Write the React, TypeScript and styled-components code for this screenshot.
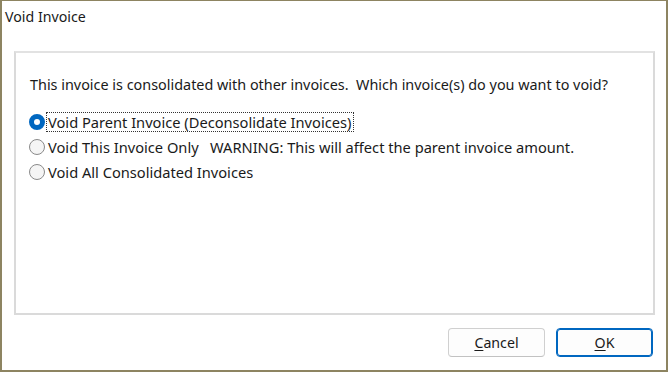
import React, { useState } from "react";
import styled, { createGlobalStyle } from "styled-components";

const Global = createGlobalStyle`
  html, body { margin: 0; padding: 0; background: #ffffff; }
  body { font-family: "Noto Sans", "Open Sans", sans-serif; }
`;

const Window = styled.div`
  box-sizing: border-box;
  width: 668px;
  height: 372px;
  background: #ffffff;
  border-style: solid;
  border-color: #8d8461;
  border-width: 1px 2px 2px 2px;
  display: flex;
  flex-direction: column;
`;

const Title = styled.div`
  font-size: 14.2px;
  line-height: 20px;
  color: #1a1a1a;
  padding: 6px 0 0 3px;
  height: 26px;
  box-sizing: border-box;
`;

const Body = styled.div`
  flex: 1;
  display: flex;
  flex-direction: column;
  padding: 24px 11px 13px 12px;
`;

const Group = styled.div`
  box-sizing: border-box;
  height: 264px;
  border: 2px solid #dadada;
  border-top-color: #e2e2e2;
  padding: 22px 0 0 13px;
  display: flex;
  flex-direction: column;
`;

const Question = styled.div`
  font-size: 14.4px;
  line-height: 20px;
  color: #1a1a1a;
  margin-left: 1px;
  margin-bottom: 17px;
`;

const Options = styled.div`
  display: flex;
  flex-direction: column;
  gap: 5px;
`;

const OptionRow = styled.label`
  display: flex;
  align-items: center;
  gap: 2px;
  height: 20px;
  cursor: default;
`;

const RadioCircle = styled.span<{ $on: boolean }>`
  box-sizing: border-box;
  width: 16px;
  height: 16px;
  border-radius: 50%;
  border: ${(p) => (p.$on ? "5px solid #0067c0" : "1px solid #8a8a8a")};
  background: ${(p) => (p.$on ? "#ffffff" : "#f5f5f5")};
  flex: none;
`;

const OptionText = styled.span<{ $focus: boolean }>`
  font-size: 14.65px;
  line-height: 18px;
  color: #1a1a1a;
  padding: 0 2px 0 1px;
  white-space: pre;
  outline: ${(p) => (p.$focus ? "1px dotted #333" : "none")};
  outline-offset: 0px;
`;

const Footer = styled.div`
  display: flex;
  justify-content: flex-end;
  gap: 11px;
  padding-top: 13px;
  padding-right: 2px;
`;

const Button = styled.button<{ $primary?: boolean }>`
  box-sizing: border-box;
  width: 97px;
  height: 29px;
  border-radius: 4px;
  background: #fdfdfd;
  border: 1px solid ${(p) => (p.$primary ? "#0067c0" : "#d0d0d0")};
  ${(p) => (p.$primary ? "box-shadow: inset 0 0 0 1px #0067c0;" : "border-bottom-color: #c2c2c2;")}
  font-family: "Noto Sans", sans-serif;
  font-size: 14.2px;
  color: #1a1a1a;
  padding: 0;
  u { text-decoration-thickness: 1px; text-underline-offset: 2px; }
`;

const options = [
  "Void Parent Invoice (Deconsolidate Invoices)",
  "Void This Invoice Only   WARNING: This will affect the parent invoice amount.",
  "Void All Consolidated Invoices",
];

export default function App() {
  const [sel, setSel] = useState(0);
  return (
    <>
      <Global />
      <Window>
        <Title>Void Invoice</Title>
        <Body>
          <Group>
            <Question>
              This invoice is consolidated with other invoices.&nbsp; Which invoice(s) do you want to void?
            </Question>
            <Options>
              {options.map((o, i) => (
                <OptionRow key={i} onClick={() => setSel(i)}>
                  <RadioCircle $on={sel === i} />
                  <OptionText $focus={i === 0}>{o}</OptionText>
                </OptionRow>
              ))}
            </Options>
          </Group>
          <Footer>
            <Button>
              <u>C</u>ancel
            </Button>
            <Button $primary>
              <u>O</u>K
            </Button>
          </Footer>
        </Body>
      </Window>
    </>
  );
}
